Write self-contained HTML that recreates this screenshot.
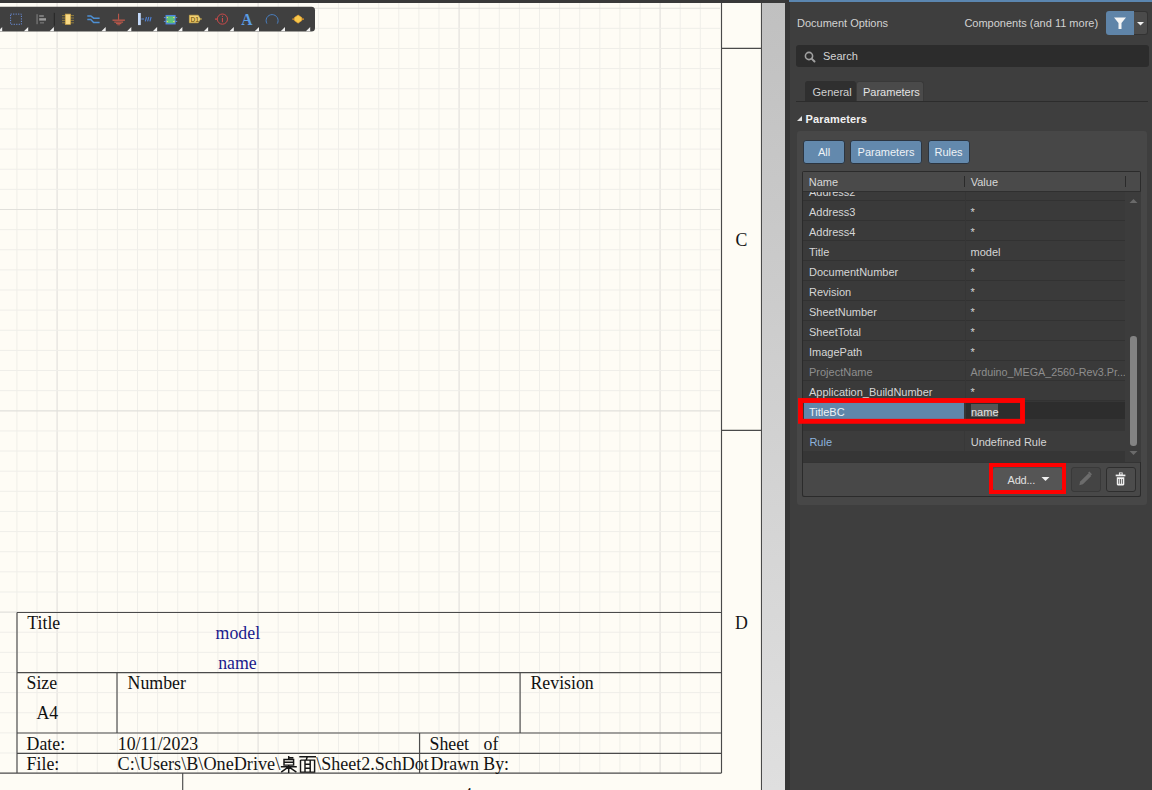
<!DOCTYPE html>
<html><head><meta charset="utf-8"><style>
html,body{margin:0;padding:0}
body{width:1152px;height:790px;overflow:hidden;position:relative;background:#fefcf5;font-family:"Liberation Sans",sans-serif}
.t{position:absolute;font-size:11px;line-height:13px;white-space:nowrap}
.btn{position:absolute;background:#6389ad;border:1.3px solid #2c3540;border-radius:3px;box-sizing:border-box;color:#eef2f6;font-size:11px;line-height:23px;text-align:center}
</style></head><body>
<div style="position:absolute;left:0;top:0;width:786px;height:3px;background:#393939"></div>
<svg width="786" height="790" style="position:absolute;left:0;top:0">
<g>
<line x1="16.90" y1="3" x2="16.90" y2="772.8" stroke="#efeee9" stroke-width="1.0"/>
<line x1="37.00" y1="3" x2="37.00" y2="772.8" stroke="#efeee9" stroke-width="1.0"/>
<line x1="57.10" y1="3" x2="57.10" y2="772.8" stroke="#e1e0db" stroke-width="1.15"/>
<line x1="77.20" y1="3" x2="77.20" y2="772.8" stroke="#efeee9" stroke-width="1.0"/>
<line x1="97.30" y1="3" x2="97.30" y2="772.8" stroke="#efeee9" stroke-width="1.0"/>
<line x1="117.40" y1="3" x2="117.40" y2="772.8" stroke="#efeee9" stroke-width="1.0"/>
<line x1="137.50" y1="3" x2="137.50" y2="772.8" stroke="#efeee9" stroke-width="1.0"/>
<line x1="157.60" y1="3" x2="157.60" y2="772.8" stroke="#efeee9" stroke-width="1.0"/>
<line x1="177.70" y1="3" x2="177.70" y2="772.8" stroke="#efeee9" stroke-width="1.0"/>
<line x1="197.80" y1="3" x2="197.80" y2="772.8" stroke="#efeee9" stroke-width="1.0"/>
<line x1="217.90" y1="3" x2="217.90" y2="772.8" stroke="#efeee9" stroke-width="1.0"/>
<line x1="238.00" y1="3" x2="238.00" y2="772.8" stroke="#efeee9" stroke-width="1.0"/>
<line x1="258.10" y1="3" x2="258.10" y2="772.8" stroke="#e1e0db" stroke-width="1.15"/>
<line x1="278.20" y1="3" x2="278.20" y2="772.8" stroke="#efeee9" stroke-width="1.0"/>
<line x1="298.30" y1="3" x2="298.30" y2="772.8" stroke="#efeee9" stroke-width="1.0"/>
<line x1="318.40" y1="3" x2="318.40" y2="772.8" stroke="#efeee9" stroke-width="1.0"/>
<line x1="338.50" y1="3" x2="338.50" y2="772.8" stroke="#efeee9" stroke-width="1.0"/>
<line x1="358.60" y1="3" x2="358.60" y2="772.8" stroke="#efeee9" stroke-width="1.0"/>
<line x1="378.70" y1="3" x2="378.70" y2="772.8" stroke="#efeee9" stroke-width="1.0"/>
<line x1="398.80" y1="3" x2="398.80" y2="772.8" stroke="#efeee9" stroke-width="1.0"/>
<line x1="418.90" y1="3" x2="418.90" y2="772.8" stroke="#efeee9" stroke-width="1.0"/>
<line x1="439.00" y1="3" x2="439.00" y2="772.8" stroke="#efeee9" stroke-width="1.0"/>
<line x1="459.10" y1="3" x2="459.10" y2="772.8" stroke="#e1e0db" stroke-width="1.15"/>
<line x1="479.20" y1="3" x2="479.20" y2="772.8" stroke="#efeee9" stroke-width="1.0"/>
<line x1="499.30" y1="3" x2="499.30" y2="772.8" stroke="#efeee9" stroke-width="1.0"/>
<line x1="519.40" y1="3" x2="519.40" y2="772.8" stroke="#efeee9" stroke-width="1.0"/>
<line x1="539.50" y1="3" x2="539.50" y2="772.8" stroke="#efeee9" stroke-width="1.0"/>
<line x1="559.60" y1="3" x2="559.60" y2="772.8" stroke="#efeee9" stroke-width="1.0"/>
<line x1="579.70" y1="3" x2="579.70" y2="772.8" stroke="#efeee9" stroke-width="1.0"/>
<line x1="599.80" y1="3" x2="599.80" y2="772.8" stroke="#efeee9" stroke-width="1.0"/>
<line x1="619.90" y1="3" x2="619.90" y2="772.8" stroke="#efeee9" stroke-width="1.0"/>
<line x1="640.00" y1="3" x2="640.00" y2="772.8" stroke="#efeee9" stroke-width="1.0"/>
<line x1="660.10" y1="3" x2="660.10" y2="772.8" stroke="#e1e0db" stroke-width="1.15"/>
<line x1="680.20" y1="3" x2="680.20" y2="772.8" stroke="#efeee9" stroke-width="1.0"/>
<line x1="700.30" y1="3" x2="700.30" y2="772.8" stroke="#efeee9" stroke-width="1.0"/>
<line x1="0" y1="8.20" x2="720" y2="8.20" stroke="#e1e0db" stroke-width="1.15"/>
<line x1="0" y1="28.33" x2="720" y2="28.33" stroke="#efeee9" stroke-width="1.0"/>
<line x1="0" y1="48.46" x2="720" y2="48.46" stroke="#efeee9" stroke-width="1.0"/>
<line x1="0" y1="68.59" x2="720" y2="68.59" stroke="#efeee9" stroke-width="1.0"/>
<line x1="0" y1="88.72" x2="720" y2="88.72" stroke="#efeee9" stroke-width="1.0"/>
<line x1="0" y1="108.85" x2="720" y2="108.85" stroke="#efeee9" stroke-width="1.0"/>
<line x1="0" y1="128.98" x2="720" y2="128.98" stroke="#efeee9" stroke-width="1.0"/>
<line x1="0" y1="149.11" x2="720" y2="149.11" stroke="#efeee9" stroke-width="1.0"/>
<line x1="0" y1="169.24" x2="720" y2="169.24" stroke="#efeee9" stroke-width="1.0"/>
<line x1="0" y1="189.37" x2="720" y2="189.37" stroke="#efeee9" stroke-width="1.0"/>
<line x1="0" y1="209.50" x2="720" y2="209.50" stroke="#e1e0db" stroke-width="1.15"/>
<line x1="0" y1="229.63" x2="720" y2="229.63" stroke="#efeee9" stroke-width="1.0"/>
<line x1="0" y1="249.76" x2="720" y2="249.76" stroke="#efeee9" stroke-width="1.0"/>
<line x1="0" y1="269.89" x2="720" y2="269.89" stroke="#efeee9" stroke-width="1.0"/>
<line x1="0" y1="290.02" x2="720" y2="290.02" stroke="#efeee9" stroke-width="1.0"/>
<line x1="0" y1="310.15" x2="720" y2="310.15" stroke="#efeee9" stroke-width="1.0"/>
<line x1="0" y1="330.28" x2="720" y2="330.28" stroke="#efeee9" stroke-width="1.0"/>
<line x1="0" y1="350.41" x2="720" y2="350.41" stroke="#efeee9" stroke-width="1.0"/>
<line x1="0" y1="370.54" x2="720" y2="370.54" stroke="#efeee9" stroke-width="1.0"/>
<line x1="0" y1="390.67" x2="720" y2="390.67" stroke="#efeee9" stroke-width="1.0"/>
<line x1="0" y1="410.80" x2="720" y2="410.80" stroke="#e1e0db" stroke-width="1.15"/>
<line x1="0" y1="430.93" x2="720" y2="430.93" stroke="#efeee9" stroke-width="1.0"/>
<line x1="0" y1="451.06" x2="720" y2="451.06" stroke="#efeee9" stroke-width="1.0"/>
<line x1="0" y1="471.19" x2="720" y2="471.19" stroke="#efeee9" stroke-width="1.0"/>
<line x1="0" y1="491.32" x2="720" y2="491.32" stroke="#efeee9" stroke-width="1.0"/>
<line x1="0" y1="511.45" x2="720" y2="511.45" stroke="#efeee9" stroke-width="1.0"/>
<line x1="0" y1="531.58" x2="720" y2="531.58" stroke="#efeee9" stroke-width="1.0"/>
<line x1="0" y1="551.71" x2="720" y2="551.71" stroke="#efeee9" stroke-width="1.0"/>
<line x1="0" y1="571.84" x2="720" y2="571.84" stroke="#efeee9" stroke-width="1.0"/>
<line x1="0" y1="591.97" x2="720" y2="591.97" stroke="#efeee9" stroke-width="1.0"/>
<line x1="0" y1="612.10" x2="720" y2="612.10" stroke="#e1e0db" stroke-width="1.15"/>
<line x1="0" y1="632.23" x2="720" y2="632.23" stroke="#efeee9" stroke-width="1.0"/>
<line x1="0" y1="652.36" x2="720" y2="652.36" stroke="#efeee9" stroke-width="1.0"/>
<line x1="0" y1="672.49" x2="720" y2="672.49" stroke="#efeee9" stroke-width="1.0"/>
<line x1="0" y1="692.62" x2="720" y2="692.62" stroke="#efeee9" stroke-width="1.0"/>
<line x1="0" y1="712.75" x2="720" y2="712.75" stroke="#efeee9" stroke-width="1.0"/>
<line x1="0" y1="732.88" x2="720" y2="732.88" stroke="#efeee9" stroke-width="1.0"/>
<line x1="0" y1="753.01" x2="720" y2="753.01" stroke="#efeee9" stroke-width="1.0"/>
</g>
<line x1="721.5" y1="3" x2="721.5" y2="773" stroke="#4a4a4a" stroke-width="1.15"/>
<line x1="761.5" y1="3" x2="761.5" y2="790" stroke="#4a4a4a" stroke-width="1.15"/>
<line x1="721.5" y1="48.4" x2="761.5" y2="48.4" stroke="#4a4a4a" stroke-width="1.15"/>
<line x1="721.5" y1="430.4" x2="761.5" y2="430.4" stroke="#4a4a4a" stroke-width="1.15"/>
<line x1="0" y1="773.1" x2="721.5" y2="773.1" stroke="#4a4a4a" stroke-width="1.15"/>
<line x1="182.7" y1="773" x2="182.7" y2="790" stroke="#4a4a4a" stroke-width="1.15"/>
<line x1="17" y1="612.5" x2="721.5" y2="612.5" stroke="#4a4a4a" stroke-width="1.15"/>
<line x1="17" y1="612.5" x2="17" y2="773" stroke="#4a4a4a" stroke-width="1.15"/>
<line x1="17" y1="672.6" x2="721.5" y2="672.6" stroke="#4a4a4a" stroke-width="1.15"/>
<line x1="17" y1="733" x2="721.5" y2="733" stroke="#4a4a4a" stroke-width="1.15"/>
<line x1="17" y1="753.3" x2="721.5" y2="753.3" stroke="#4a4a4a" stroke-width="1.15"/>
<line x1="117.0" y1="672.6" x2="117.0" y2="733" stroke="#4a4a4a" stroke-width="1.15"/>
<line x1="520.1" y1="672.6" x2="520.1" y2="733" stroke="#4a4a4a" stroke-width="1.15"/>
<line x1="419.6" y1="733" x2="419.6" y2="773" stroke="#4a4a4a" stroke-width="1.15"/>
<g font-family="Liberation Serif" font-size="17.8" fill="#151515">
<text transform="translate(27.3 628.8) scale(1 1.09)" fill="#111">Title</text>
<text transform="translate(215.6 638.6) scale(1 1.09)" fill="#1a1a8c">model</text>
<text transform="translate(218.2 668.6) scale(1 1.09)" fill="#1a1a8c">name</text>
<text transform="translate(26.5 689) scale(1 1.09)" fill="#111">Size</text>
<text transform="translate(36.4 719.0) scale(1 1.09)" fill="#111">A4</text>
<text transform="translate(127.6 689) scale(1 1.09)" fill="#111">Number</text>
<text transform="translate(530.5 689) scale(1 1.09)" fill="#111">Revision</text>
<text transform="translate(26.6 749.9) scale(1 1.09)" fill="#111">Date:</text>
<text transform="translate(117.8 749.9) scale(1 1.09)" fill="#111">10/11/2023</text>
<text transform="translate(429.5 749.9) scale(1 1.09)" fill="#111">Sheet</text>
<text transform="translate(483.6 749.9) scale(1 1.09)" fill="#111">of</text>
<text transform="translate(26.6 769.8) scale(1 1.09)" fill="#111">File:</text>
<text transform="translate(430.5 769.7) scale(1 1.09)" fill="#111">Drawn By:</text>
<text transform="translate(117.5 769.8) scale(1 1.09)" textLength="162.7" lengthAdjust="spacingAndGlyphs">C:\Users\B\OneDrive\</text>
<text transform="translate(316.2 769.8) scale(1 1.09)" textLength="112.6" lengthAdjust="spacingAndGlyphs">\Sheet2.SchDot</text>
<g fill="none" stroke="#151515" stroke-width="1.45" transform="translate(280.2 755.9)">
<path d="M8.5 0 V3.6 M8.5 1.9 H13.2 M3.8 3.6 H13.4 V9.2 H3.8 Z M3.8 6.4 H13.4 M0.6 10.9 H16.6 M8.5 9.2 V17 M8 11.2 L1 16.2 M9 11.2 L16.2 16.2"/>
</g>
<g fill="none" stroke="#151515" stroke-width="1.45" transform="translate(299 755.9)">
<path d="M0.3 0.9 H17 M8.3 0.9 L7.2 4.2 M1.5 4.2 H15.6 V16.8 M1.5 4.2 V16.8 M1.5 16.2 H15.6 M6 4.2 V16.2 M11.2 4.2 V16.2 M6 8.4 H11.2 M6 12.3 H11.2"/>
</g>
<text transform="translate(735.6 246.2) scale(1 1.09)" font-size="17.8">C</text>
<text transform="translate(734.9 629) scale(1 1.09)" font-size="17.8">D</text>
<text transform="translate(463.3 801) scale(1 1.09)">4</text>
</g>
</svg>
<div style="position:absolute;left:762px;top:0;width:23.5px;height:790px;background:linear-gradient(#c0c0c0,#dfdfdf)"></div>
<div style="position:absolute;left:762px;top:0;width:24px;height:3px;background:#393939"></div>
<svg style="position:absolute;left:0;top:0" width="330" height="40">
<rect x="-10" y="6.8" width="325" height="24.8" rx="3.5" fill="#404040"/>
<path d="M2.2 27 L2.2 31.3 L-2.0999999999999996 31.3 Z" fill="#f2f2f2"/>
<path d="M28.2 27 L28.2 31.3 L23.9 31.3 Z" fill="#f2f2f2"/>
<path d="M53.9 27 L53.9 31.3 L49.6 31.3 Z" fill="#f2f2f2"/>
<path d="M105.7 27 L105.7 31.3 L101.4 31.3 Z" fill="#f2f2f2"/>
<path d="M131.3 27 L131.3 31.3 L127.00000000000001 31.3 Z" fill="#f2f2f2"/>
<path d="M157.1 27 L157.1 31.3 L152.79999999999998 31.3 Z" fill="#f2f2f2"/>
<path d="M182.4 27 L182.4 31.3 L178.1 31.3 Z" fill="#f2f2f2"/>
<path d="M208.1 27 L208.1 31.3 L203.79999999999998 31.3 Z" fill="#f2f2f2"/>
<path d="M233.8 27 L233.8 31.3 L229.5 31.3 Z" fill="#f2f2f2"/>
<path d="M259.0 27 L259.0 31.3 L254.7 31.3 Z" fill="#f2f2f2"/>
<path d="M285.0 27 L285.0 31.3 L280.7 31.3 Z" fill="#f2f2f2"/>
<path d="M310.2 27 L310.2 31.3 L305.9 31.3 Z" fill="#f2f2f2"/>
<rect x="10.6" y="14.1" width="10.8" height="10.2" fill="none" stroke="#6a8edb" stroke-width="1" stroke-dasharray="1.2 1.3"/>
<rect x="36.6" y="14.2" width="0.9" height="10" fill="#8e8e8e"/>
<rect x="39.2" y="15" width="4.6" height="2" fill="#7a7a7a"/>
<rect x="39.2" y="18.2" width="6.8" height="2.4" fill="#9a9a9a"/>
<rect x="40" y="22" width="4" height="1.6" fill="#6a6a6a"/>
<rect x="53.8" y="12.8" width="1" height="13" fill="#262626"/>
<g stroke="#a88d3c" stroke-width="0.75">
<line x1="62" y1="15.6" x2="74" y2="15.6"/>
<line x1="62" y1="18.0" x2="74" y2="18.0"/>
<line x1="62" y1="20.4" x2="74" y2="20.4"/>
<line x1="62" y1="22.8" x2="74" y2="22.8"/>
</g>
<rect x="65.3" y="14.1" width="5.3" height="10.3" fill="#f9da86" stroke="#cfa645" stroke-width="0.7"/>
<path d="M87.3 16 H90.8 L93.6 18.2 H99.6 M87.3 19.5 H90.8 L93.6 22.5 H99.6" fill="none" stroke="#4e8fd2" stroke-width="1.5"/>
<g fill="#d65d4c"><rect x="118.2" y="13.7" width="0.9" height="6"/><rect x="112.5" y="19.6" width="12.4" height="1.1"/><rect x="114.3" y="21.6" width="8.8" height="1"/><rect x="116" y="23.2" width="5.4" height="0.9"/><rect x="117.3" y="24.5" width="2.8" height="0.7"/></g>
<rect x="138" y="13" width="2.8" height="12.1" fill="#c4dafa"/>
<path d="M141.3 19 H144" stroke="#5a8ad8" stroke-width="1"/>
<path d="M145.3 21.3 L146.5 17 M147.6 21.3 L148.8 17 M149.9 21.3 L151.1 17" stroke="#4f82d6" stroke-width="1.1"/>
<rect x="166.2" y="15.6" width="8.8" height="8.2" fill="#5cc27a" stroke="#4d86e0" stroke-width="1.3"/>
<g fill="#efe36a"><path d="M166.6 16.6 L168.4 17.6 L166.6 18.6 Z"/><path d="M166.6 20.4 L168.4 21.4 L166.6 22.4 Z"/><path d="M174.6 16.6 L172.8 17.6 L174.6 18.6 Z"/><path d="M174.6 20.4 L172.8 21.4 L174.6 22.4 Z"/></g>
<path d="M163.9 17.6 H165.6 M163.9 21.4 H165.6 M175.6 17.6 H177.2 M175.6 21.4 H177.2" stroke="#5a8fe0" stroke-width="1"/>
<path d="M189.4 15.2 H198.2 L200.5 19 L198.2 22.8 H189.4 Z" fill="#f2d173" stroke="#d4b04a" stroke-width="0.6"/>
<path d="M200.5 19 H202" stroke="#d4b04a" stroke-width="0.9"/>
<text x="190.4" y="21.7" font-family="Liberation Sans" font-weight="bold" font-size="6.8" fill="#8a6a20">D1</text>
<circle cx="222.4" cy="19.1" r="5.1" fill="none" stroke="#c94a4a" stroke-width="1"/>
<path d="M215 19.1 H217.3" stroke="#c94a4a" stroke-width="1.3"/>
<rect x="221.9" y="18" width="1.1" height="4.2" fill="#c94a4a"/><rect x="221.9" y="15.8" width="1.1" height="1.1" fill="#c94a4a"/>
<text transform="translate(241.2 25) scale(0.9 1)" font-family="Liberation Serif" font-weight="bold" font-size="17.3" fill="#5a9ce4">A</text>
<path d="M266.9 23.6 A6 6 0 1 1 277.3 23.6" fill="none" stroke="#4a7fc0" stroke-width="1"/>
<path d="M292.3 19.1 H304" stroke="#e79b2a" stroke-width="1.2"/>
<path d="M298.1 15 L301.8 17.6 L301.8 20.6 L298.1 23.2 L294.4 20.6 L294.4 17.6 Z" fill="#f8c84a" stroke="#eaa030" stroke-width="0.6"/>
</svg>
<div id="panel" style="position:absolute;left:785px;top:0;width:367px;height:790px;background:#3e3e3e;overflow:hidden">
<div style="position:absolute;left:0.0px;top:0.0px;width:4.8px;height:790.0px;background:#363636"></div>
<div style="position:absolute;left:3.5px;top:0.0px;width:363.5px;height:2.0px;background:#5b86b0"></div>
<div class="t" style="left:12.0px;top:16.9px;font-size:11px;color:#d2d2d2">Document Options</div>
<div class="t" style="left:179.4px;top:16.9px;font-size:11px;color:#d2d2d2">Components (and 11 more)</div>
<div style="position:absolute;left:321.0px;top:11.0px;width:28.2px;height:23.7px;background:#5f84a8;border-radius:3px 0 0 3px"></div>
<div style="position:absolute;left:349.2px;top:11.0px;width:14.3px;height:23.7px;background:#4b4b4b;border-radius:0 3px 3px 0;box-sizing:border-box;border:1px solid #333;border-left:none"></div>
<svg style="position:absolute;left:321px;top:11px" width="28" height="24"><path d="M8 6.5 H20 L15.5 12 V18 H12.5 V12 Z" fill="#f4f4f4"/></svg>
<svg style="position:absolute;left:349px;top:18px" width="14" height="10"><path d="M3 4 H10 L6.5 7.5 Z" fill="#f0f0f0"/></svg>
<div style="position:absolute;left:11.4px;top:45.0px;width:352.4px;height:21.5px;background:#2c2c2c;border-radius:3px"></div>
<svg style="position:absolute;left:18px;top:50px" width="14" height="14"><circle cx="6" cy="6" r="3.6" stroke="#a0a0a0" stroke-width="1.6" fill="none"/><path d="M8.6 8.6 L11.5 11.5" stroke="#a0a0a0" stroke-width="2" stroke-linecap="round"/></svg>
<div class="t" style="left:38.0px;top:49.9px;font-size:11px;color:#d4d4d4">Search</div>
<div style="position:absolute;left:20.4px;top:81.3px;width:50.9px;height:20.2px;background:#2f2f2f;border-radius:3px 3px 0 0"></div>
<div style="position:absolute;left:71.3px;top:81.3px;width:68.1px;height:20.2px;background:#4a4a4a;border-radius:3px 3px 0 0;box-sizing:border-box;border:1px solid #393939;border-bottom:none"></div>
<div class="t" style="left:27.5px;top:86.4px;font-size:11px;color:#d0d0d0">General</div>
<div class="t" style="left:78.0px;top:86.4px;font-size:11px;color:#e4e4e4">Parameters</div>
<div style="position:absolute;left:11.4px;top:101.0px;width:351.6px;height:1.3px;background:#2c2c2c"></div>
<svg style="position:absolute;left:11px;top:114px" width="8" height="8"><path d="M1 7 H6 V2 Z" fill="#e0e0e0"/></svg>
<div class="t" style="left:20.6px;top:112.8px;font-size:11px;color:#f2f2f2;font-weight:bold;letter-spacing:0.15px">Parameters</div>
<div style="position:absolute;left:11.5px;top:131.0px;width:350.5px;height:374.0px;background:#474747;border-radius:3px"></div>
<div class="btn" style="left:18.4px;top:139.5px;width:41.3px;height:24.3px">All</div>
<div class="btn" style="left:65.2px;top:139.5px;width:71.7px;height:24.3px">Parameters</div>
<div class="btn" style="left:142.5px;top:139.5px;width:42.0px;height:24.3px">Rules</div>
<div style="position:absolute;left:17.4px;top:170.6px;width:338.8px;height:326.9px;background:#363636;border-radius:1.5px;border:1px solid #2b2b2b;box-sizing:border-box"></div>
<div style="position:absolute;left:18.2px;top:171.5px;width:337.2px;height:19.8px;background:#4a4a4a"></div>
<div style="position:absolute;left:17.5px;top:190.8px;width:338.5px;height:1.0px;background:#2f2f2f"></div>
<div class="t" style="left:23.8px;top:176.3px;font-size:11px;color:#d8d8d8">Name</div>
<div class="t" style="left:185.7px;top:176.3px;font-size:11px;color:#d8d8d8">Value</div>
<div style="position:absolute;left:179.2px;top:176.0px;width:1.0px;height:11.0px;background:#2a2a2a"></div>
<div style="position:absolute;left:340.2px;top:176.0px;width:1.0px;height:11.0px;background:#2a2a2a"></div>
<div style="position:absolute;left:17.5px;top:191.8px;width:323px;height:228px;overflow:hidden">
<div style="position:absolute;left:0;top:-11.0px;width:162px;height:20px;background:#3a3a3a;border-bottom:1px solid #323232;box-sizing:border-box"></div>
<div style="position:absolute;left:163px;top:-11.0px;width:160px;height:20px;background:#3a3a3a;border-bottom:1px solid #323232;box-sizing:border-box"></div>
<div class="t" style="left:6.5px;top:-5.8px;color:#d6d6d6">Address2</div>
<div style="position:absolute;left:0;top:9.0px;width:162px;height:20px;background:#3a3a3a;border-bottom:1px solid #323232;box-sizing:border-box"></div>
<div style="position:absolute;left:163px;top:9.0px;width:160px;height:20px;background:#3a3a3a;border-bottom:1px solid #323232;box-sizing:border-box"></div>
<div class="t" style="left:6.5px;top:14.2px;color:#d6d6d6">Address3</div>
<div class="t" style="left:168px;top:14.2px;color:#d6d6d6;">*</div>
<div style="position:absolute;left:0;top:29.0px;width:162px;height:20px;background:#3a3a3a;border-bottom:1px solid #323232;box-sizing:border-box"></div>
<div style="position:absolute;left:163px;top:29.0px;width:160px;height:20px;background:#3a3a3a;border-bottom:1px solid #323232;box-sizing:border-box"></div>
<div class="t" style="left:6.5px;top:34.2px;color:#d6d6d6">Address4</div>
<div class="t" style="left:168px;top:34.2px;color:#d6d6d6;">*</div>
<div style="position:absolute;left:0;top:49.0px;width:162px;height:20px;background:#3a3a3a;border-bottom:1px solid #323232;box-sizing:border-box"></div>
<div style="position:absolute;left:163px;top:49.0px;width:160px;height:20px;background:#3a3a3a;border-bottom:1px solid #323232;box-sizing:border-box"></div>
<div class="t" style="left:6.5px;top:54.2px;color:#d6d6d6">Title</div>
<div class="t" style="left:168px;top:54.2px;color:#d6d6d6;">model</div>
<div style="position:absolute;left:0;top:69.0px;width:162px;height:20px;background:#3a3a3a;border-bottom:1px solid #323232;box-sizing:border-box"></div>
<div style="position:absolute;left:163px;top:69.0px;width:160px;height:20px;background:#3a3a3a;border-bottom:1px solid #323232;box-sizing:border-box"></div>
<div class="t" style="left:6.5px;top:74.2px;color:#d6d6d6">DocumentNumber</div>
<div class="t" style="left:168px;top:74.2px;color:#d6d6d6;">*</div>
<div style="position:absolute;left:0;top:89.0px;width:162px;height:20px;background:#3a3a3a;border-bottom:1px solid #323232;box-sizing:border-box"></div>
<div style="position:absolute;left:163px;top:89.0px;width:160px;height:20px;background:#3a3a3a;border-bottom:1px solid #323232;box-sizing:border-box"></div>
<div class="t" style="left:6.5px;top:94.2px;color:#d6d6d6">Revision</div>
<div class="t" style="left:168px;top:94.2px;color:#d6d6d6;">*</div>
<div style="position:absolute;left:0;top:109.0px;width:162px;height:20px;background:#3a3a3a;border-bottom:1px solid #323232;box-sizing:border-box"></div>
<div style="position:absolute;left:163px;top:109.0px;width:160px;height:20px;background:#3a3a3a;border-bottom:1px solid #323232;box-sizing:border-box"></div>
<div class="t" style="left:6.5px;top:114.2px;color:#d6d6d6">SheetNumber</div>
<div class="t" style="left:168px;top:114.2px;color:#d6d6d6;">*</div>
<div style="position:absolute;left:0;top:129.0px;width:162px;height:20px;background:#3a3a3a;border-bottom:1px solid #323232;box-sizing:border-box"></div>
<div style="position:absolute;left:163px;top:129.0px;width:160px;height:20px;background:#3a3a3a;border-bottom:1px solid #323232;box-sizing:border-box"></div>
<div class="t" style="left:6.5px;top:134.2px;color:#d6d6d6">SheetTotal</div>
<div class="t" style="left:168px;top:134.2px;color:#d6d6d6;">*</div>
<div style="position:absolute;left:0;top:149.0px;width:162px;height:20px;background:#3a3a3a;border-bottom:1px solid #323232;box-sizing:border-box"></div>
<div style="position:absolute;left:163px;top:149.0px;width:160px;height:20px;background:#3a3a3a;border-bottom:1px solid #323232;box-sizing:border-box"></div>
<div class="t" style="left:6.5px;top:154.2px;color:#d6d6d6">ImagePath</div>
<div class="t" style="left:168px;top:154.2px;color:#d6d6d6;">*</div>
<div style="position:absolute;left:0;top:169.0px;width:162px;height:20px;background:#3a3a3a;border-bottom:1px solid #323232;box-sizing:border-box"></div>
<div style="position:absolute;left:163px;top:169.0px;width:160px;height:20px;background:#3a3a3a;border-bottom:1px solid #323232;box-sizing:border-box"></div>
<div class="t" style="left:6.5px;top:174.2px;color:#8e8e8e">ProjectName</div>
<div class="t" style="left:168px;top:174.2px;color:#8e8e8e;font-size:10.75px;">Arduino_MEGA_2560-Rev3.Pr...</div>
<div style="position:absolute;left:0;top:189.0px;width:162px;height:20px;background:#3a3a3a;border-bottom:1px solid #323232;box-sizing:border-box"></div>
<div style="position:absolute;left:163px;top:189.0px;width:160px;height:20px;background:#3a3a3a;border-bottom:1px solid #323232;box-sizing:border-box"></div>
<div class="t" style="left:6.5px;top:194.2px;color:#d6d6d6">Application_BuildNumber</div>
<div class="t" style="left:168px;top:194.2px;color:#d6d6d6;">*</div>
<div style="position:absolute;left:1.4px;top:210.7px;width:160.6px;height:16.5px;background:#6086aa"></div>
<div style="position:absolute;left:163px;top:210.7px;width:160px;height:16.5px;background:#2d2d2d"></div>
<div class="t" style="left:6.5px;top:214.2px;color:#eef2f6">TitleBC</div>
<div style="position:absolute;left:168.5px;top:212.2px;width:27px;height:13.5px;background:#555"></div>
<div class="t" style="left:168.5px;top:214.2px;color:#e4e4e4">name</div>
</div>
<div style="position:absolute;left:17.5px;top:430.8px;width:322.7px;height:20.1px;background:#3c3c3c"></div>
<div class="t" style="left:24.4px;top:435.9px;font-size:11px;color:#8db3de">Rule</div>
<div class="t" style="left:185.7px;top:435.9px;font-size:11px;color:#d4d4d4">Undefined Rule</div>
<div style="position:absolute;left:179.2px;top:430.8px;width:1.0px;height:20.1px;background:#383838"></div>
<div style="position:absolute;left:340.2px;top:191.8px;width:15.8px;height:270.2px;background:#3c3c3c"></div>
<svg style="position:absolute;left:341px;top:197px" width="16" height="8"><path d="M3.5 6 H11.5 L7.5 2 Z" fill="#6a6a6a"/></svg>
<svg style="position:absolute;left:341px;top:449px" width="16" height="8"><path d="M3.5 2 H11.5 L7.5 6 Z" fill="#6a6a6a"/></svg>
<div style="position:absolute;left:345.1px;top:336.0px;width:6.5px;height:109.5px;background:#838383;border-radius:3.2px"></div>
<div style="position:absolute;left:17.8px;top:462.3px;width:337.4px;height:34.2px;background:#484848;border-radius:0 0 2px 2px;border-top:1px solid #343434;box-sizing:border-box"></div>
<div style="position:absolute;left:208.0px;top:467.5px;width:69.0px;height:22.5px;background:#555555;border-radius:2px"></div>
<div class="t" style="left:222.5px;top:473.9px;font-size:11px;color:#e0e0e0;letter-spacing:-0.2px">Add...</div>
<svg style="position:absolute;left:255px;top:473px" width="12" height="12"><path d="M1.5 4 H9.5 L5.5 8 Z" fill="#f0f0f0"/></svg>
<div style="position:absolute;left:286.4px;top:467.4px;width:29.4px;height:24.5px;background:#444;border:1px solid #393939;border-radius:3px;box-sizing:border-box"></div>
<div style="position:absolute;left:320.5px;top:467.4px;width:30.4px;height:24.5px;background:#4c4c4c;border:1px solid #2e2e2e;border-radius:3px;box-sizing:border-box"></div>
<svg style="position:absolute;left:0;top:0" width="367" height="790"><g transform="translate(-785 0)"><path d="M1079.3 485.2 L1080.2 481.6 L1088.6 473.2 L1091.3 475.9 L1082.9 484.3 Z" fill="#6c6c6c"/><path d="M1088.1 472.7 L1089.3 471.5 L1092 474.2 L1090.8 475.4 Z" fill="#6c6c6c"/><rect x="1115.7" y="474.6" width="9.7" height="1.7" fill="#f2f2f2"/><rect x="1119.4" y="472.9" width="2.8" height="2" fill="none" stroke="#f2f2f2" stroke-width="0.9"/><path d="M1116.8 477.2 H1124.3 V484.3 Q1124.3 485.4 1123.2 485.4 H1117.9 Q1116.8 485.4 1116.8 484.3 Z" fill="#f2f2f2"/><rect x="1118.3" y="479" width="0.9" height="4.8" fill="#555"/><rect x="1120.1" y="479" width="0.9" height="4.8" fill="#555"/><rect x="1121.9" y="479" width="0.9" height="4.8" fill="#555"/></g></svg>
<svg style="position:absolute;left:0;top:390px" width="250" height="40"><rect x="15.5" y="10.5" width="222" height="20.8" fill="none" stroke="#ff0000" stroke-width="4.9"/></svg>
<div style="position:absolute;left:204.3px;top:463.4px;width:76.3px;height:30.8px;border:4px solid #ff0000;box-sizing:border-box"></div>
</div>
</body></html>
